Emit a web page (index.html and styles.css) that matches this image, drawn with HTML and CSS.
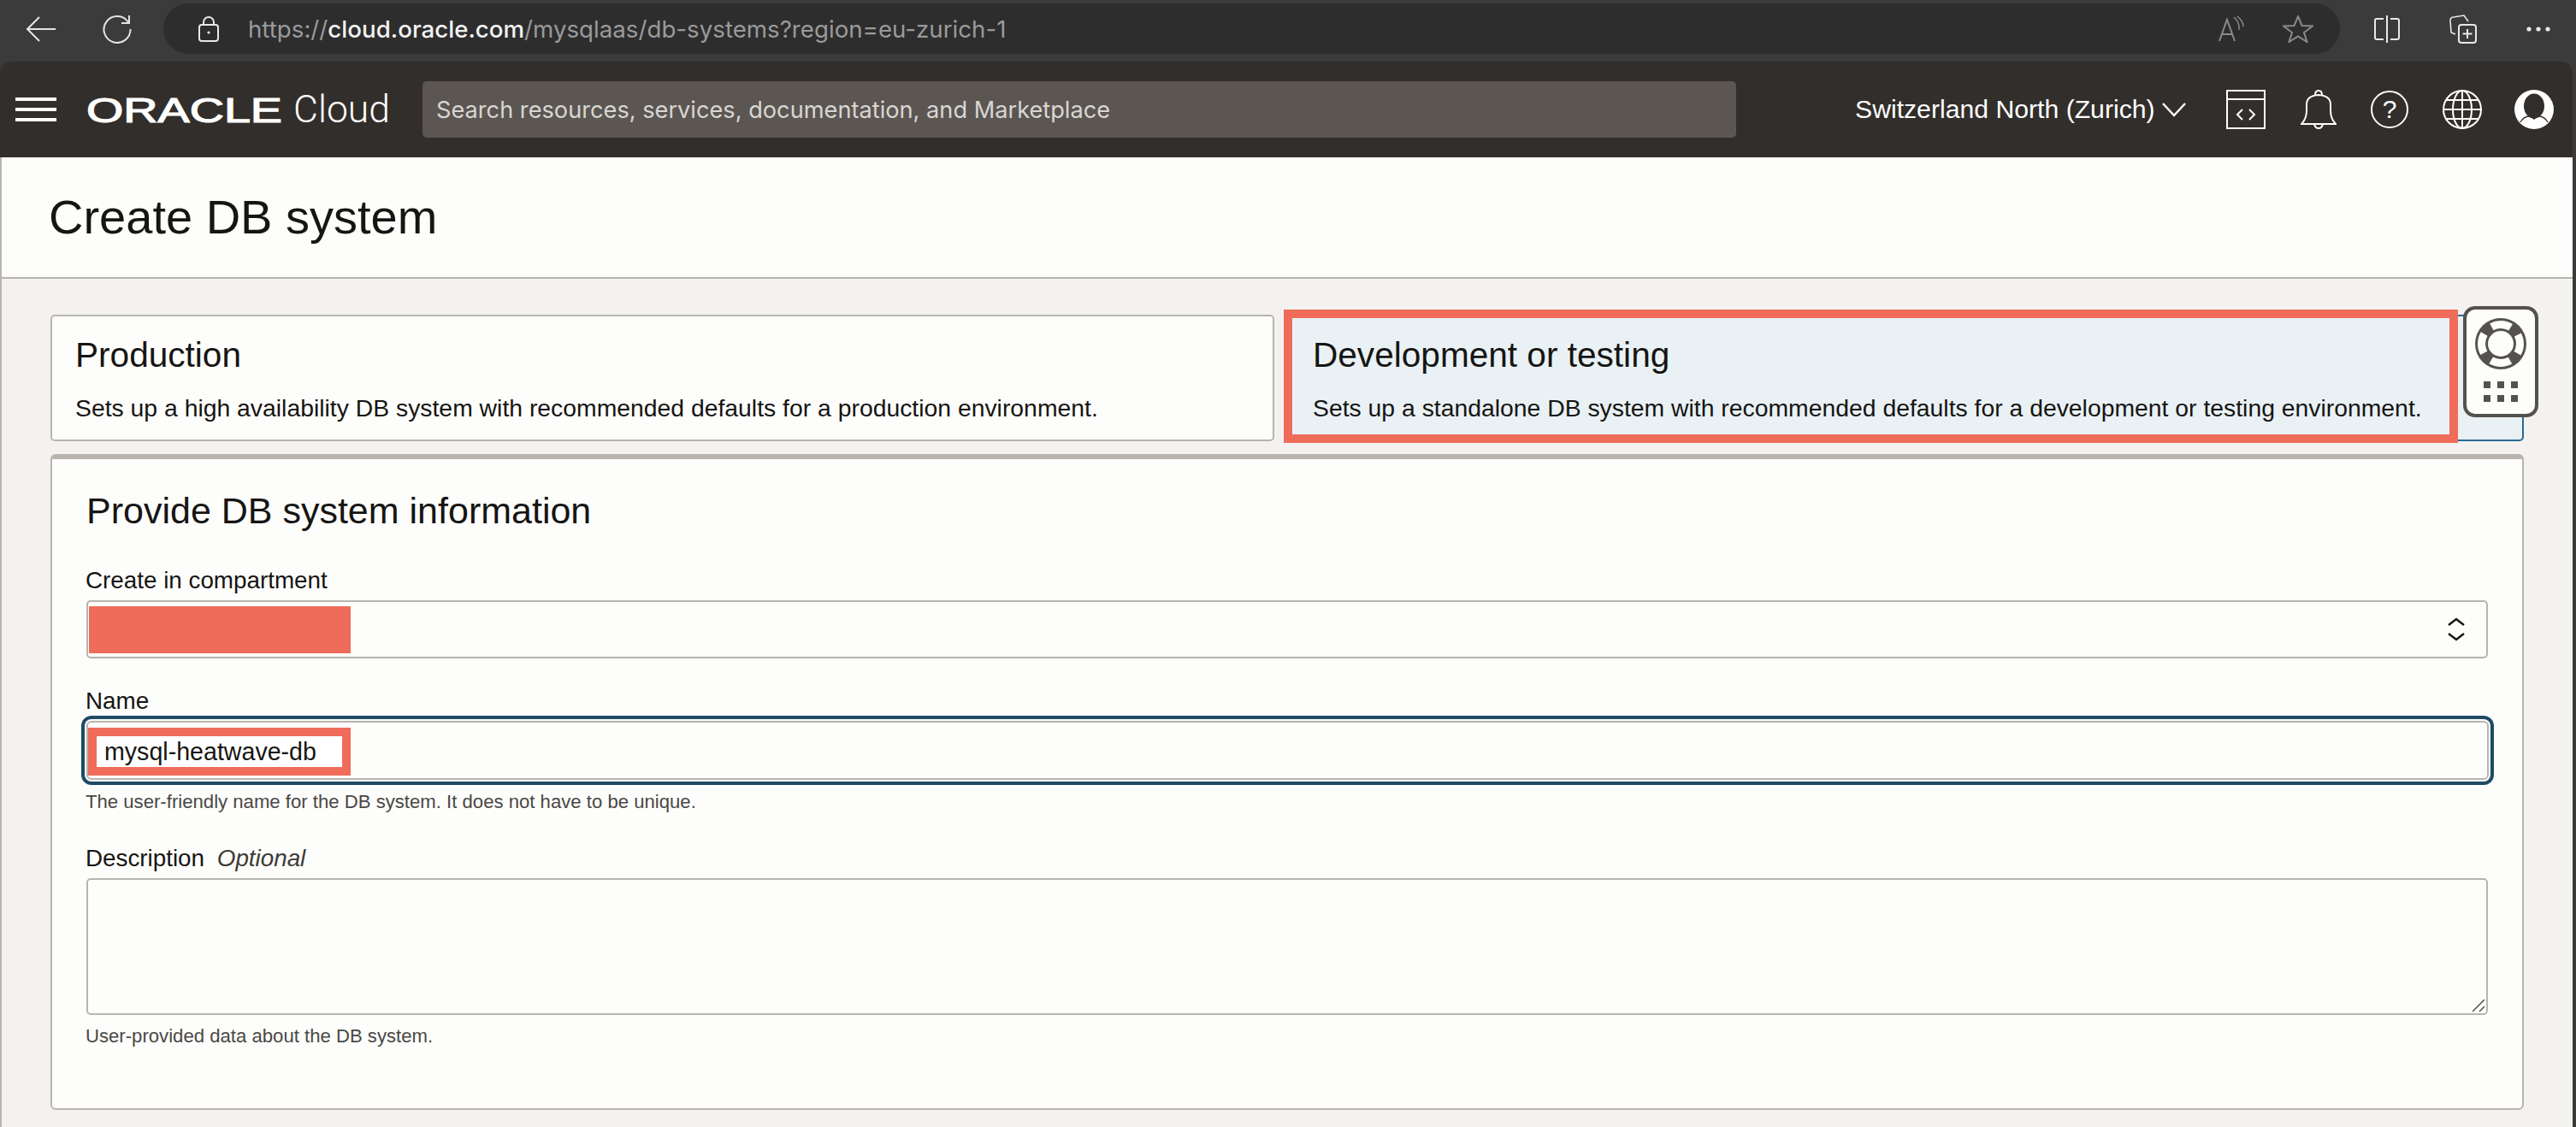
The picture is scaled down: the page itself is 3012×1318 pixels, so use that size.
FILE: index.html
```html
<!DOCTYPE html>
<html lang="en">
<head>
<meta charset="utf-8">
<title>Create DB system</title>
<link rel="stylesheet" href="styles.css">
</head>
<body>
<div class="window">
  <div class="browser-bar">
    <svg class="b-back" width="36" height="30" viewBox="0 0 36 30" fill="none" stroke="#e4e4e4" stroke-width="2"><path d="M1 15H35M16 1 2 15 16 29"/></svg>
    <svg class="b-reload" width="34" height="34" viewBox="0 0 34 34" fill="none" stroke="#e4e4e4" stroke-width="2"><path d="M31 1V10H22"/><path d="M30 9A15.500 15.500 0 1 0 32.500 17"/></svg>
    <div class="url-pill">
      <svg class="b-lock" width="24" height="30" viewBox="0 0 24 30" fill="none" stroke="#e8e8e8" stroke-width="2"><rect x="1" y="10" width="22" height="19" rx="3"/><path d="M6 10V7a6 6 0 0 1 12 0v3"/><circle cx="12" cy="19" r="1.600" fill="#e8e8e8" stroke="none"/></svg>
      <span class="url"><span>https://</span><b>cloud.oracle.com</b><span>/mysqlaas/db-systems?region=eu-zurich-1</span></span>
      <svg class="b-read" width="32" height="32" viewBox="0 0 32 32" fill="none" stroke="#8a8a8a" stroke-width="2"><path d="M2 30 11 5 20 30M5 22H17"/><path d="M19 2q7 6 6 15M23 1q7 6 7 12" stroke-width="1.500"/></svg>
      <svg class="b-star" width="36" height="32" viewBox="0 0 36 32" fill="none" stroke="#8a8a8a" stroke-width="2"><path d="M18 1 22.500 12 35 12.500 25 20 28.500 31 18 24.500 7.500 31 11 20 1 12.500 13.500 12Z"/></svg>
    </div>
    <svg class="b-split" width="30" height="32" viewBox="0 0 30 32" fill="none" stroke="#e8e8e8" stroke-width="2"><path d="M11 4H3a2 2 0 0 0-2 2V26a2 2 0 0 0 2 2H11M19 4H27a2 2 0 0 1 2 2V26a2 2 0 0 1-2 2H19M15 0V32"/></svg>
    <svg class="b-coll" width="32" height="34" viewBox="0 0 32 34" fill="none" stroke="#e8e8e8" stroke-width="2"><rect x="11" y="12" width="20" height="21" rx="3"/><path d="M21 17V28M15.500 22.500H26.500"/><path d="M7 23 2 21 1 7Q1 3 5 3L17 1 22 8" stroke-width="1.600"/></svg>
    <svg class="b-dots" width="28" height="6" viewBox="0 0 28 6" fill="#e8e8e8"><circle cx="3" cy="3" r="2.600"/><circle cx="14" cy="3" r="2.600"/><circle cx="25" cy="3" r="2.600"/></svg>
  </div>

  <header class="top-bar">
    <svg class="menu" width="48" height="28" viewBox="0 0 48 28" fill="#fff"><rect width="48" height="4"/><rect y="12" width="48" height="4"/><rect y="24" width="48" height="4"/></svg>
    <svg class="logo" width="232" height="36" viewBox="0 0 232 36"><text class="logo-word" x="1" y="33" textLength="229" lengthAdjust="spacingAndGlyphs">ORACLE</text></svg>
    <span class="cloud">Cloud</span>
    <div class="search">Search resources, services, documentation, and Marketplace</div>
    <span class="region">Switzerland North (Zurich)</span>
    <svg class="chev" width="28" height="18" viewBox="0 0 28 18" fill="none" stroke="#fff" stroke-width="2.500"><path d="M1 2 14 16 27 2"/></svg>
    <svg class="i-code" width="46" height="46" viewBox="0 0 46 46" fill="none" stroke="#fff" stroke-width="2"><rect x="1" y="1" width="44" height="44"/><path d="M1 11H45"/><path d="M19 23 13 29 19 35M27 23 33 29 27 35"/></svg>
    <svg class="i-bell" width="42" height="46" viewBox="0 0 42 46" fill="none" stroke="#fff" stroke-width="2"><path d="M1 40Q7 34 7 24V17Q7 7 21 6 35 7 35 17V24Q35 34 41 40Z"/><path d="M17 6Q17 1 21 1T25 6M16 40Q17 45 21 45T26 40"/></svg>
    <svg class="i-help" width="44" height="44" viewBox="0 0 44 44"><circle cx="22" cy="22" r="21" fill="none" stroke="#fff" stroke-width="2"/><text class="help-mark" x="22" y="32" text-anchor="middle">?</text></svg>
    <svg class="i-globe" width="46" height="46" viewBox="0 0 46 46" fill="none" stroke="#fff" stroke-width="2"><circle cx="23" cy="23" r="22"/><ellipse cx="23" cy="23" rx="11" ry="22"/><path d="M23 1V45M2 23H44M5 12H41M5 34H41"/></svg>
    <svg class="i-user" width="46" height="46" viewBox="0 0 46 46"><circle cx="23" cy="23" r="23" fill="#fff"/><ellipse cx="23" cy="19" rx="12" ry="14.500" fill="#322e2b"/><path d="M7 38Q11 30 19 31L23 34 27 31Q35 30 39 38" fill="none" stroke="#322e2b" stroke-width="1.500"/></svg>
  </header>

  <main class="page">
    <div class="page-head"><h1 class="page-title">Create DB system</h1></div>
    <div class="content">
      <div class="options">
        <div class="option">
          <h2 class="option-title">Production</h2>
          <p class="option-text">Sets up a high availability DB system with recommended defaults for a production environment.</p>
        </div>
        <div class="option option-selected">
          <h2 class="option-title">Development or testing</h2>
          <p class="option-text">Sets up a standalone DB system with recommended defaults for a development or testing environment.</p>
          <div class="highlight"></div>
          <div class="help-widget">
            <svg width="60" height="60" viewBox="0 0 60 60"><circle cx="30" cy="30" r="30" fill="#55524d"/><circle class="buoy" cx="30" cy="30" r="22.500"/><circle cx="30" cy="30" r="15" fill="#fdfdfb"/></svg>
            <svg class="widget-grid" width="40" height="24" viewBox="0 0 40 24" fill="#55524d"><rect width="8" height="8"/><rect x="16" width="8" height="8"/><rect x="32" width="8" height="8"/><rect y="16" width="8" height="8"/><rect x="16" y="16" width="8" height="8"/><rect x="32" y="16" width="8" height="8"/></svg>
          </div>
        </div>
      </div>

      <section class="card">
        <h2 class="card-title">Provide DB system information</h2>
        <label class="label">Create in compartment</label>
        <div class="select">
          <div class="redact"></div>
          <svg width="20" height="28" viewBox="0 0 20 28" fill="none" stroke="#161513" stroke-width="2.500"><path d="M1 9 10 2 19 9M1 19 10 26 19 19"/></svg>
        </div>
        <label class="label label-next">Name</label>
        <div class="input"><div class="name-box">mysql-heatwave-db</div></div>
        <p class="hint">The user-friendly name for the DB system. It does not have to be unique.</p>
        <label class="label label-next label-desc">Description <i class="optional">Optional</i></label>
        <div class="textarea-wrap">
          <textarea class="textarea"></textarea>
          <svg class="resizer" width="16" height="16" viewBox="0 0 16 16" fill="none" stroke="#55524d" stroke-width="1.500"><path d="M1 15 15 1M9 15 15 9"/></svg>
        </div>
        <p class="hint hint-last">User-provided data about the DB system.</p>
      </section>
    </div>
  </main>
</div>
</body>
</html>
```
FILE: styles.css
```css
* { box-sizing: border-box; }
html, body { margin: 0; height: 100%; }
body {
  background: #3b3b3b;
  font-family: "Liberation Sans", Arial, sans-serif;
  color: #161513;
  overflow: hidden;
}
.window { width: 3012px; height: 1318px; display: flex; flex-direction: column; overflow: hidden; }

/* browser chrome */
.browser-bar { height: 72px; flex: none; display: flex; align-items: center; padding-bottom: 5px; }
.b-back { margin-left: 30px; flex: none; }
.b-reload { margin-left: 54px; flex: none; }
.url-pill {
  margin-left: 37px; width: 2545px; height: 59px; background: #2d2d2d; border-radius: 30px;
  display: flex; align-items: center; flex: none;
}
.b-lock { margin-left: 41px; flex: none; }
.url { margin-left: 34px; font-family: "Inter", sans-serif; font-size: 27.7px; color: #9a9a9a; white-space: nowrap; }
.url b { color: #f2f2f2; font-weight: 500; }
.b-read { margin-left: auto; flex: none; }
.b-star { margin-left: 44px; margin-right: 31px; flex: none; }
.b-split { margin-left: 40px; flex: none; }
.b-coll { margin-left: 58px; flex: none; }
.b-dots { margin-left: 58px; flex: none; }

/* console header */
.top-bar {
  width: 3008px; height: 112px; flex: none; background: #322e2b; border-radius: 14px 14px 0 0;
  display: flex; align-items: center; color: #fff;
}
.menu { margin-left: 18px; flex: none; }
.logo { margin-left: 34px; flex: none; overflow: visible; }
.logo-word { font-family: "Liberation Sans", sans-serif; font-weight: 400; font-size: 41px; fill: #fff; stroke: #fff; stroke-width: 1.2px; }
.cloud { margin-left: 11px; font-family: "Roboto", sans-serif; font-weight: 300; font-size: 44.5px; width: 151px; flex: none; }
.search {
  width: 1536px; height: 66px; background: #5b5652; border-radius: 5px; flex: none;
  display: flex; align-items: center; padding-left: 16px;
  font-family: "Inter", sans-serif; font-size: 27.2px; color: #d9d6d2;
}
.region { margin-left: 139px; width: 349px; font-family: "Liberation Sans", sans-serif; font-size: 30.2px; white-space: nowrap; flex: none; }
.chev { margin-left: 10px; flex: none; }
.i-code { margin-left: 47px; flex: none; }
.i-bell { margin-left: 41px; flex: none; }
.i-help { margin-left: 40px; flex: none; }
.i-globe { margin-left: 40px; flex: none; }
.i-user { margin-left: 38px; flex: none; }
.help-mark { font-family: "Liberation Sans", sans-serif; font-size: 30px; fill: #fff; }

/* page */
.page { width: 3008px; flex: 1; background: #f3f2f0; border-left: 2px solid #b9b4ae; min-height: 0; }
.page-head { height: 142px; background: #fdfdfb; border-bottom: 2px solid #b9b4ae; display: flex; align-items: center; padding-left: 55px; padding-bottom: 2px; }
.page-title { margin: 0; font-size: 56px; font-weight: 400; }
.content { padding: 42px 57px 0; }
.options { display: grid; grid-template-columns: 1431px 1fr; column-gap: 18px; }
.option {
  position: relative; height: 148px; background: #fdfdfb; border: 2px solid #b9b4ae; border-radius: 5px;
  padding: 21px 27px 0;
}
.option-selected { background: #e9f1f5; border-color: #2a6a94; padding-left: 25px; }
.option-title { margin: 0; font-size: 40.6px; line-height: 48px; font-weight: 400; }
.option-text { margin: 20px 0 0; font-size: 28.35px; line-height: 36px; white-space: nowrap; }
.highlight {
  position: absolute; left: -9px; top: -8px; width: 1373px; height: 156px;
  border: 10px solid #ef6c5a;
}
.help-widget {
  position: absolute; right: -19px; top: -12px; width: 88px; height: 130px;
  background: #fdfdfb; border: 4px solid #55524d; border-radius: 14px;
  display: flex; flex-direction: column; align-items: center; padding-top: 10px;
}
.buoy { fill: none; stroke: #fdfdfb; stroke-width: 9; stroke-dasharray: 23.3 12; stroke-dashoffset: 11.65; }
.widget-grid { margin-top: 14px; }

.card {
  margin-top: 15px; height: 767px; background: #fdfdfb; border: 2px solid #b9b4ae; border-top-width: 6px;
  border-radius: 6px; padding: 36px 40px 0;
}
.card-title { margin: 0 0 41px; font-size: 43px; line-height: 48px; font-weight: 400; }
.label { display: block; font-size: 27.8px; line-height: 33px; margin: 0 0 7px -1px; }
.label-next { margin-top: 33px; }
.label-desc { margin-top: 35px; }
.optional { color: #3d3b38; margin-left: 7px; }
.select, .input, .textarea { display: block; width: 2808px; border: 2px solid #b9b4ae; border-radius: 5px; background: #fdfdfb; }
.select { height: 68px; display: flex; align-items: center; justify-content: space-between; padding: 3px 25px 3px 1px; }
.redact { width: 306px; height: 55px; background: #ef6c5a; }
.input { height: 69px; width: 2809px; display: flex; align-items: center; box-shadow: 0 0 0 2px #fdfdfb, 0 0 0 6px #1f4a63; border-radius: 6px; }
.name-box {
  width: 307px; height: 56px; border: 10px solid #ef6c5a; background: #fff; margin-top: 2px;
  font-size: 28.6px; line-height: 36px; padding-left: 9px; white-space: nowrap;
}
.hint { margin: 12px 0 0 -1px; font-size: 22.15px; line-height: 28px; color: #4a4845; }
.textarea-wrap { position: relative; width: 2808px; height: 160px; }
.textarea { height: 160px; resize: none; padding: 0; margin: 0; outline: none; font: inherit; }
.resizer { position: absolute; right: 3px; bottom: 3px; }
.hint-last { margin-top: 11px; }
```
